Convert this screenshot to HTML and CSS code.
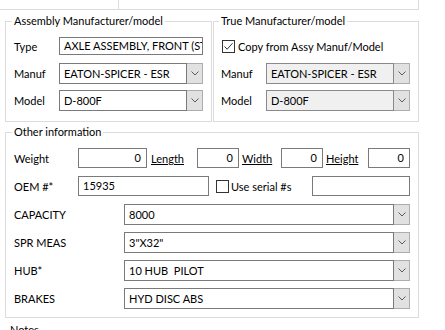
FILE: index.html
```html
<!DOCTYPE html>
<html>
<head>
<meta charset="utf-8">
<link rel="stylesheet" href="styles.css">
</head>
<body>
<div class="topstrip"><div class="cell"></div><div class="cell"></div></div>

<div class="upper">
  <section class="group g-assy">
    <h2 class="group-title">Assembly Manufacturer/model</h2>
    <div class="form">
      <span class="lbl">Type</span>
      <div class="text">AXLE ASSEMBLY, FRONT (STEER)</div>
      <span class="lbl">Manuf</span>
      <div class="combo"><span class="val">EATON-SPICER - ESR</span><span class="btn"><svg width="8" height="5" viewBox="0 0 8 5"><path d="M0.5 0.5 L4 4 L7.5 0.5" fill="none" stroke="#5a5a5a" stroke-width="1"/></svg></span></div>
      <span class="lbl">Model</span>
      <div class="combo"><span class="val">D-800F</span><span class="btn"><svg width="8" height="5" viewBox="0 0 8 5"><path d="M0.5 0.5 L4 4 L7.5 0.5" fill="none" stroke="#5a5a5a" stroke-width="1"/></svg></span></div>
    </div>
  </section>

  <section class="group g-true">
    <h2 class="group-title">True Manufacturer/model</h2>
    <div class="form">
      <div class="check-row">
        <span class="cb"><svg width="13" height="13" viewBox="0 0 13 13"><rect x="0.5" y="0.5" width="12" height="12" fill="#fff" stroke="#333"/><path d="M2.5 6.5 L5.2 9.2 L10.5 3.2" fill="none" stroke="#333" stroke-width="1"/></svg></span>
        <span>Copy from Assy Manuf/Model</span>
      </div>
      <span class="lbl">Manuf</span>
      <div class="combo disabled"><span class="val">EATON-SPICER - ESR</span><span class="btn"><svg width="8" height="5" viewBox="0 0 8 5"><path d="M0.5 0.5 L4 4 L7.5 0.5" fill="none" stroke="#5a5a5a" stroke-width="1"/></svg></span></div>
      <span class="lbl">Model</span>
      <div class="combo disabled"><span class="val">D-800F</span><span class="btn"><svg width="8" height="5" viewBox="0 0 8 5"><path d="M0.5 0.5 L4 4 L7.5 0.5" fill="none" stroke="#5a5a5a" stroke-width="1"/></svg></span></div>
    </div>
  </section>
</div>

<section class="group g-other">
  <h2 class="group-title">Other information</h2>
  <div class="rows">
    <div class="row">
      <span class="lbl w-lbl">Weight</span>
      <div class="text num w-weight">0</div>
      <span class="link l-length">Length</span>
      <div class="text num w-small">0</div>
      <span class="link l-width">Width</span>
      <div class="text num w-small">0</div>
      <span class="link l-height">Height</span>
      <div class="text num w-small">0</div>
    </div>
    <div class="row">
      <span class="lbl w-lbl">OEM #*</span>
      <div class="text w-oem">15935</div>
      <span class="cb cb-serial"><svg width="13" height="13" viewBox="0 0 13 13"><rect x="0.5" y="0.5" width="12" height="12" fill="#fff" stroke="#333"/></svg></span>
      <span class="serial-lbl">Use serial #s</span>
      <div class="text w-serial"></div>
    </div>
    <div class="row">
      <span class="lbl c-lbl">CAPACITY</span>
      <div class="combo wide"><span class="val">8000</span><span class="btn"><svg width="8" height="5" viewBox="0 0 8 5"><path d="M0.5 0.5 L4 4 L7.5 0.5" fill="none" stroke="#5a5a5a" stroke-width="1"/></svg></span></div>
    </div>
    <div class="row">
      <span class="lbl c-lbl">SPR MEAS</span>
      <div class="combo wide"><span class="val">3"X32"</span><span class="btn"><svg width="8" height="5" viewBox="0 0 8 5"><path d="M0.5 0.5 L4 4 L7.5 0.5" fill="none" stroke="#5a5a5a" stroke-width="1"/></svg></span></div>
    </div>
    <div class="row">
      <span class="lbl c-lbl">HUB*</span>
      <div class="combo wide"><span class="val">10 HUB&nbsp; PILOT</span><span class="btn"><svg width="8" height="5" viewBox="0 0 8 5"><path d="M0.5 0.5 L4 4 L7.5 0.5" fill="none" stroke="#5a5a5a" stroke-width="1"/></svg></span></div>
    </div>
    <div class="row">
      <span class="lbl c-lbl">BRAKES</span>
      <div class="combo wide"><span class="val">HYD DISC ABS</span><span class="btn"><svg width="8" height="5" viewBox="0 0 8 5"><path d="M0.5 0.5 L4 4 L7.5 0.5" fill="none" stroke="#5a5a5a" stroke-width="1"/></svg></span></div>
    </div>
  </div>
</section>

<div class="notes">Notes</div>
</body>
</html>
```

FILE: styles.css
```css
* { box-sizing: border-box; }
html, body { margin: 0; padding: 0; }
body {
  width: 445px;
  height: 330px;
  overflow: hidden;
  background: #fff;
  color: #000;
  font-family: Lato, "Noto Sans", sans-serif;
  font-size: 11px;
  line-height: 16px;
}

.topstrip {
  display: grid;
  grid-template-columns: 119px 300px;
  width: 419px;
  height: 10px;
  border-bottom: 1px solid #dcdcdc;
}
.topstrip .cell { border-right: 1px solid #dcdcdc; }

.upper {
  display: flex;
  gap: 1px;
  padding-left: 5px;
  margin-top: 11px;
}

.group {
  border: 1px solid #dcdcdc;
}
.group-title {
  width: fit-content;
  margin: -9px 0 0 -2px;
  padding: 0 2px;
  background: #fff;
  font-size: inherit;
  font-weight: normal;
  line-height: 16px;
}

.g-assy { width: 207px; height: 101px; padding: 0 8px 0 8px; }
.g-true { width: 206px; height: 101px; padding: 0 8px 0 7px; }

.form {
  display: grid;
  grid-template-columns: 45px 144px;
  grid-auto-rows: 21px;
  row-gap: 6px;
  align-items: center;
  margin-top: 7px;
}

.check-row {
  grid-column: 1 / 3;
  display: flex;
  align-items: center;
  gap: 3px;
  padding-left: 1px;
}
.cb { display: flex; width: 13px; height: 13px; }

.text {
  height: 18px;
  border: 1px solid #7a7a7a;
  background: #fff;
  padding: 0 4px;
  line-height: 16px;
  white-space: nowrap;
  overflow: hidden;
}
.form .text { align-self: start; margin-top: 1px; }
.text.num { text-align: right; padding-right: 5px; }

.combo {
  display: flex;
  height: 21px;
}
.combo .val {
  flex: 1;
  border: 1px solid #7a7a7a;
  background: #fff;
  padding: 0 4px;
  line-height: 19px;
  white-space: nowrap;
  overflow: hidden;
}
.combo .btn {
  width: 16px;
  border: 1px solid #adadad;
  border-left: none;
  background: #e1e1e1;
  display: flex;
  align-items: center;
  justify-content: center;
}
.combo.disabled .val { background: #f0f0f0; border-color: #8a8a8a; }

.g-other {
  margin: 10px 0 0 5px;
  width: 414px;
  height: 186px;
  padding: 0 8px 0 8px;
}
.rows { display: flex; flex-direction: column; gap: 7px; margin-top: 8px; }
.row { display: flex; align-items: center; height: 21px; }
.row .text { height: 20px; line-height: 18px; align-self: flex-start; }

.w-lbl { width: 64px; }
.w-weight { width: 69px; }
.w-small { width: 42px; }
.link { text-decoration: underline; }
.l-length { width: 46px; margin-left: 4px; }
.l-width { width: 39px; margin-left: 3px; }
.l-height { width: 42px; margin-left: 3px; }

.w-oem { width: 131px; }
.cb-serial { margin-left: 7px; }
.serial-lbl { width: 81px; margin-left: 2px; }
.w-serial { width: 98px; }

.c-lbl { width: 110px; }
.combo.wide { width: 286px; }

.notes { margin: 4px 0 0 10px; }
```
